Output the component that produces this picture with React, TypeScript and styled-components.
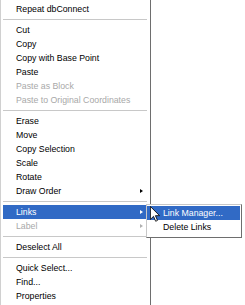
import React from "react";
import styled, { createGlobalStyle } from "styled-components";

type Entry =
  | { kind: "sep" }
  | { kind: "item"; label: string; disabled?: boolean; sub?: boolean; active?: boolean };

const entries: Entry[] = [
  { kind: "item", label: "Repeat dbConnect" },
  { kind: "sep" },
  { kind: "item", label: "Cut" },
  { kind: "item", label: "Copy" },
  { kind: "item", label: "Copy with Base Point" },
  { kind: "item", label: "Paste" },
  { kind: "item", label: "Paste as Block", disabled: true },
  { kind: "item", label: "Paste to Original Coordinates", disabled: true },
  { kind: "sep" },
  { kind: "item", label: "Erase" },
  { kind: "item", label: "Move" },
  { kind: "item", label: "Copy Selection" },
  { kind: "item", label: "Scale" },
  { kind: "item", label: "Rotate" },
  { kind: "item", label: "Draw Order", sub: true },
  { kind: "sep" },
  { kind: "item", label: "Links", sub: true, active: true },
  { kind: "item", label: "Label", sub: true, disabled: true },
  { kind: "sep" },
  { kind: "item", label: "Deselect All" },
  { kind: "sep" },
  { kind: "item", label: "Quick Select..." },
  { kind: "item", label: "Find..." },
  { kind: "item", label: "Properties" },
];

const App = () => {
  return (
    <>
      <GlobalStyle />
      <Stage>
        <Menu>
          {entries.map((e, i) =>
            e.kind === "sep" ? (
              <Separator key={i} />
            ) : (
              <Item key={i} $disabled={e.disabled} $active={e.active}>
                <span>{e.label}</span>
                {e.sub && <Arrow $disabled={e.disabled} $active={e.active} />}
              </Item>
            )
          )}
        </Menu>
        <SubMenu>
          <SubItem $active>Link Manager...</SubItem>
          <SubItem>Delete Links</SubItem>
        </SubMenu>
        <Cursor width="10" height="16" viewBox="0 0 12 19">
          <path
            d="M0.5 0.5 L0.5 16 L4.2 12.3 L6.8 18.2 L9 17.2 L6.5 11.5 L11.5 11.5 Z"
            fill="#fff"
            stroke="#000"
            strokeWidth="1"
            strokeLinejoin="miter"
          />
        </Cursor>
      </Stage>
    </>
  );
};

export default App;

const GlobalStyle = createGlobalStyle`
  html, body {
    margin: 0;
    padding: 0;
    background: #ffffff;
  }
  body {
    font-family: "Liberation Sans", Arial, sans-serif;
    font-size: 8.75px;
    color: #000000;
  }
`;

const Stage = styled.div`
  position: relative;
  width: 245px;
  height: 305px;
  overflow: hidden;
  background: #ffffff;
`;

const Menu = styled.div`
  display: flex;
  flex-direction: column;
  width: 144px;
  padding: 2px 3px 0 2px;
  border-left: 1px solid #d0d0d0;
  border-right: 1px solid #6e6e6e;
  background: #ffffff;
  min-height: 305px;
`;

const Item = styled.div<{ $disabled?: boolean; $active?: boolean }>`
  display: flex;
  align-items: center;
  justify-content: space-between;
  height: 14px;
  padding: 0 4px 0 13px;
  white-space: nowrap;
  background: ${(p) => (p.$active ? "#316ac5" : "transparent")};
  color: ${(p) => (p.$active ? "#ffffff" : p.$disabled ? "#a8a8a8" : "#000000")};
`;

const Arrow = styled.i<{ $disabled?: boolean; $active?: boolean }>`
  width: 0;
  height: 0;
  border-top: 2.5px solid transparent;
  border-bottom: 2.5px solid transparent;
  border-left: 3px solid
    ${(p) => (p.$active ? "#ffffff" : p.$disabled ? "#b0b0b0" : "#000000")};
`;

const Separator = styled.div`
  height: 7px;
  display: flex;
  align-items: center;
  &::before {
    content: "";
    flex: 1;
    height: 1px;
    background: #c8c8c8;
  }
`;

const SubMenu = styled.div`
  position: absolute;
  left: 146px;
  top: 204px;
  width: 93px;
  padding: 1px 1px 3px 0;
  background: #ffffff;
  border: 1px solid #c8c8c8;
  border-right-color: #6e6e6e;
  border-bottom-color: #6e6e6e;
  display: flex;
  flex-direction: column;
`;

const SubItem = styled.div<{ $active?: boolean }>`
  height: 14px;
  display: flex;
  align-items: center;
  padding-left: 16px;
  white-space: nowrap;
  background: ${(p) => (p.$active ? "#316ac5" : "transparent")};
  color: ${(p) => (p.$active ? "#ffffff" : "#000000")};
`;

const Cursor = styled.svg`
  position: absolute;
  left: 150px;
  top: 206px;
`;
